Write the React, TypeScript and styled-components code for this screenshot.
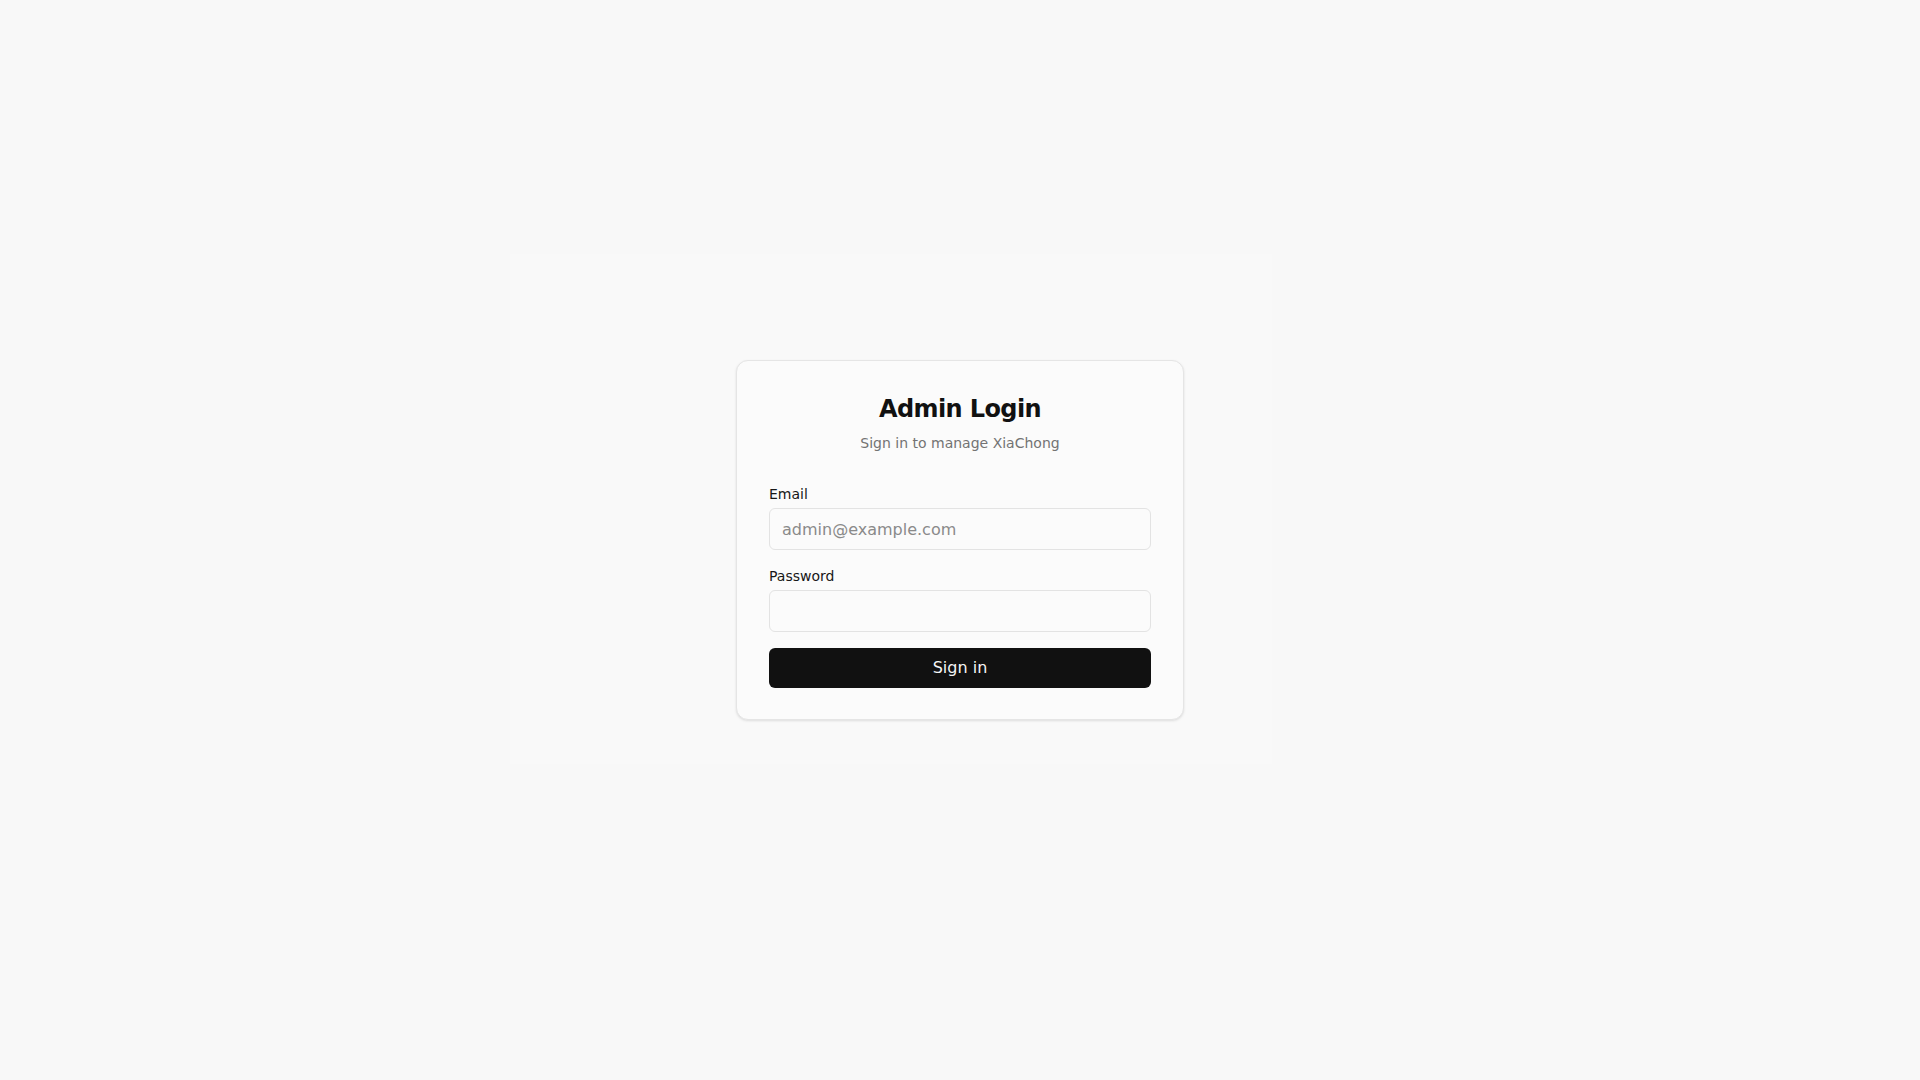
import React from 'react';
import styled, { createGlobalStyle } from 'styled-components';

const GlobalStyle = createGlobalStyle`
  * {
    box-sizing: border-box;
  }
  html,
  body {
    margin: 0;
    padding: 0;
    background: #f8f8f8;
    font-family: 'DejaVu Sans', 'Noto Sans', sans-serif;
    color: #111111;
  }
`;

const Page = styled.main`
  position: relative;
  min-height: 100vh;
  display: flex;
  align-items: center;
  justify-content: center;
  overflow: hidden;
`;

// faint panel that sits behind the card
const Backdrop = styled.div`
  position: absolute;
  left: 510px;
  top: 254px;
  width: 762px;
  height: 510px;
  background: #f9f9f9;
  pointer-events: none;
`;

const Card = styled.section`
  position: relative;
  width: 448px;
  padding: 32px 32px 31px;
  background: #fbfbfb;
  border: 1px solid #e5e5e5;
  border-radius: 12px;
  box-shadow: 0 1px 3px rgba(0, 0, 0, 0.08), 0 1px 2px rgba(0, 0, 0, 0.04);
`;

const Header = styled.header`
  display: flex;
  flex-direction: column;
  align-items: center;
  margin-bottom: 31px;
`;

const Title = styled.h1`
  margin: 0;
  font-size: 24px;
  line-height: 32px;
  font-weight: 700;
  letter-spacing: -0.6px;
  color: #111111;
`;

const Subtitle = styled.p`
  margin: 8px 0 0;
  font-size: 14px;
  line-height: 20px;
  color: #737373;
`;

const Form = styled.form`
  display: flex;
  flex-direction: column;
  gap: 16px;
`;

const Field = styled.div`
  display: flex;
  flex-direction: column;
  gap: 4px;
`;

const Label = styled.label`
  font-size: 14px;
  line-height: 20px;
  color: #171717;
`;

const Input = styled.input`
  width: 100%;
  height: 42px;
  padding: 8px 12px;
  font-family: inherit;
  font-size: 16px;
  line-height: 24px;
  color: #111111;
  background: #fbfbfb;
  border: 1px solid #e3e3e3;
  border-radius: 6px;
  outline: none;
  &::placeholder {
    color: #8a8a8a;
  }
`;

const SubmitButton = styled.button`
  width: 100%;
  height: 40px;
  padding: 8px 16px;
  font-family: inherit;
  font-size: 16px;
  line-height: 24px;
  color: #f5f5f5;
  background: #111111;
  border: none;
  border-radius: 6px;
  cursor: pointer;
`;

const App = () => {
  return (
    <>
      <GlobalStyle />
      <Page>
        <Backdrop />
        <Card>
          <Header>
            <Title>Admin Login</Title>
            <Subtitle>Sign in to manage XiaChong</Subtitle>
          </Header>
          <Form onSubmit={(e) => e.preventDefault()}>
            <Field>
              <Label htmlFor='email'>Email</Label>
              <Input id='email' type='email' placeholder='admin@example.com' />
            </Field>
            <Field>
              <Label htmlFor='password'>Password</Label>
              <Input id='password' type='password' />
            </Field>
            <SubmitButton type='submit'>Sign in</SubmitButton>
          </Form>
        </Card>
      </Page>
    </>
  );
};

export default App;
